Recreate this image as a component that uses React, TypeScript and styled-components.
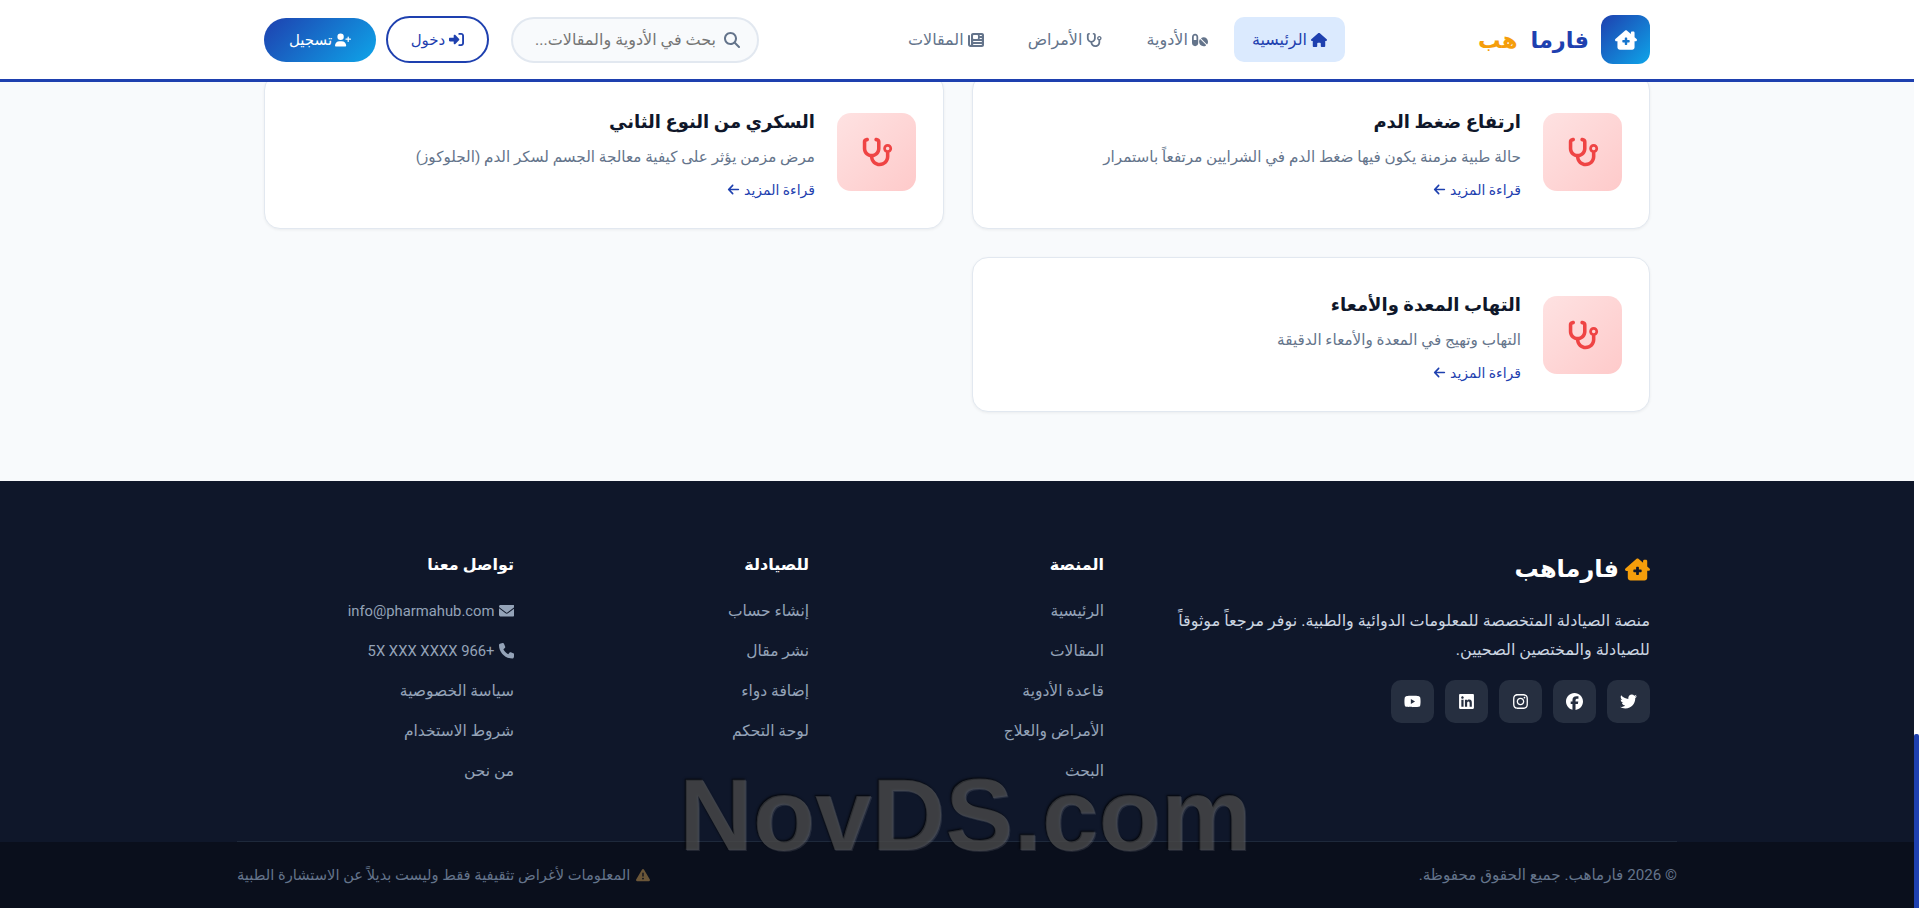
import React from "react";
import styled, { createGlobalStyle } from "styled-components";
import {
  FaHouse,
  FaPills,
  FaStethoscope,
  FaNewspaper,
  FaMagnifyingGlass,
  FaRightToBracket,
  FaUserPlus,
  FaHouseChimneyMedical,
  FaEnvelope,
  FaPhone,
  FaTriangleExclamation,
  FaTwitter,
  FaFacebook,
  FaInstagram,
  FaLinkedin,
  FaYoutube,
  FaArrowLeft,
} from "react-icons/fa6";

const GlobalStyle = createGlobalStyle`
  html, body { margin: 0; height: 908px; overflow: hidden; }
  body { font-family: Roboto, "DejaVu Sans", sans-serif; background: #f8fafc; }
  * { box-sizing: border-box; }
  a { text-decoration: none; color: inherit; }
  svg { height: 1em; width: auto; flex: none; }
`;

const Frame = styled.div`
  display: flex;
  width: 1919px;
  height: 908px;
  overflow: hidden;
  position: relative;
`;

const ScrollRail = styled.div`
  width: 5px;
  background: #fff;
  display: flex;
  flex-direction: column;
  justify-content: flex-end;
`;

const ScrollThumb = styled.div`
  height: 174px;
  background: #1e40af;
  border-radius: 2px 2px 0 0;
`;

const Page = styled.div`
  direction: rtl;
  width: 1914px;
  display: flex;
  flex-direction: column;
`;

const Header = styled.header`
  height: 82px;
  flex: none;
  background: #fff;
  border-bottom: 3px solid #1e40af;
  padding: 0 264px;
  display: flex;
  align-items: center;
  position: relative;
  z-index: 2;
`;

const Logo = styled.div`
  display: flex;
  align-items: center;
  gap: 12px;
  font-weight: 700;
  font-size: 22.5px;
  color: #1e40af;
  width: 174px;
  flex: none;
`;

const LogoMark = styled.div`
  width: 49px;
  height: 49px;
  flex: none;
  border-radius: 12px;
  background: linear-gradient(135deg, #1e40af, #0ea5e9);
  color: #fff;
  display: flex;
  align-items: center;
  justify-content: center;
  font-size: 22px;
`;

const LogoAccent = styled.span`
  color: #f59e0b;
  margin-right: 13px;
`;

const Nav = styled.nav`
  display: flex;
  align-items: center;
  gap: 8px;
  margin-right: 131px;
`;

const NavLink = styled.a<{ $active?: boolean }>`
  display: flex;
  align-items: center;
  gap: 4px;
  height: 45px;
  padding: 0 18px;
  border-radius: 10px;
  font-size: 16px;
  white-space: nowrap;
  color: ${(p) => (p.$active ? "#1e40af" : "#64748b")};
  background: ${(p) => (p.$active ? "#dbeafe" : "transparent")};
  svg { font-size: 16px; }
`;

const Actions = styled.div`
  margin-right: auto;
  display: flex;
  align-items: center;
  gap: 22px;
`;

const Search = styled.div`
  width: 248px;
  height: 46px;
  border: 2px solid #e2e8f0;
  background: #f8fafc;
  border-radius: 24px;
  display: flex;
  align-items: center;
  gap: 8px;
  padding: 0 17px;
  font-size: 16px;
  color: #757575;
  white-space: nowrap;
  overflow: hidden;
  svg { font-size: 16px; color: #64748b; }
`;

const Buttons = styled.div`
  display: flex;
  align-items: center;
  gap: 10px;
`;

const OutlineButton = styled.a`
  height: 47px;
  width: 103px;
  border: 2px solid #1e40af;
  border-radius: 24px;
  color: #1e40af;
  font-size: 15px;
  display: flex;
  align-items: center;
  justify-content: center;
  gap: 4px;
  svg { font-size: 15px; }
`;

const FilledButton = styled.a`
  height: 44px;
  width: 112px;
  border-radius: 22px;
  background: linear-gradient(135deg, #1e40af, #0ea5e9);
  color: #fff;
  font-size: 15px;
  display: flex;
  align-items: center;
  justify-content: center;
  gap: 3px;
  svg { font-size: 16px; }
`;

const Main = styled.main`
  margin-top: -8px;
  height: 407px;
  flex: none;
  padding: 0 264px;
  display: grid;
  grid-template-columns: 678px 680px;
  grid-auto-rows: 155px;
  gap: 28px;
  align-content: start;
`;

const Card = styled.article`
  background: #fff;
  border: 1px solid #e2e8f0;
  border-radius: 16px;
  box-shadow: 0 1px 3px rgba(0, 0, 0, 0.06);
  padding: 0 27px;
  display: flex;
  gap: 22px;
  align-items: center;
`;

const CardIcon = styled.div`
  width: 79px;
  height: 78px;
  flex: none;
  border-radius: 14px;
  background: linear-gradient(135deg, #fee2e2, #fecaca);
  color: #ef4444;
  display: flex;
  align-items: center;
  justify-content: center;
  font-size: 32px;
`;

const CardBody = styled.div`
  display: flex;
  flex-direction: column;
  padding-top: 3px;
`;

const CardTitle = styled.h3`
  margin: 0 0 11px;
  font-size: 18px;
  font-weight: 700;
  color: #0f172a;
  line-height: 26px;
`;

const CardText = styled.p`
  margin: 0 0 14px;
  font-size: 15.2px;
  color: #64748b;
  line-height: 22px;
`;

const ReadMore = styled.a`
  display: flex;
  align-items: center;
  gap: 4px;
  height: 16px;
  font-size: 14px;
  color: #1e40af;
  svg { font-size: 13px; }
`;

const Footer = styled.footer`
  flex: 1;
  background: #0f172a;
  display: flex;
  flex-direction: column;
`;

const FooterGrid = styled.div`
  height: 361px;
  margin: 0 237px;
  padding: 72px 27px 0;
  display: grid;
  grid-template-columns: 546px 295px 295px 1fr;
  border-bottom: 1px solid #1e293b;
`;

const BrandTitle = styled.div`
  display: flex;
  align-items: center;
  gap: 6px;
  color: #fff;
  font-size: 24px;
  font-weight: 700;
  margin: 2px 0 23px;
  svg { color: #f59e0b; font-size: 25px; }
`;

const BrandText = styled.p`
  margin: 0 0 16px;
  color: #cbd5e1;
  font-size: 16px;
  line-height: 29px;
  width: 480px;
`;

const Socials = styled.div`
  display: flex;
  gap: 11px;
`;

const SocialButton = styled.a`
  width: 43px;
  height: 43px;
  border-radius: 10px;
  background: #262f40;
  color: #fff;
  display: flex;
  align-items: center;
  justify-content: center;
  font-size: 17px;
`;

const Column = styled.div`
  display: flex;
  flex-direction: column;
`;

const ColumnTitle = styled.h4`
  margin: 0 0 14px;
  color: #fff;
  font-size: 16px;
  font-weight: 700;
  line-height: 24px;
`;

const ColumnLink = styled.a`
  display: flex;
  align-items: center;
  gap: 4px;
  height: 40px;
  color: #94a3b8;
  font-size: 15.5px;
  white-space: nowrap;
`;

const ContactValue = styled.span`
  font-size: 14.8px;
`;

const FooterBar = styled.div`
  flex: 1;
  background: #0a0f1c;
  padding: 0 237px;
  display: flex;
  align-items: center;
  justify-content: space-between;
  color: #64748b;
  font-size: 15.2px;
`;

const Note = styled.span`
  display: flex;
  align-items: center;
  gap: 6px;
  font-size: 14.7px;
  svg { color: #6b5638; font-size: 14px; }
`;

const Watermark = styled.div`
  position: absolute;
  left: 679px;
  top: 755px;
  font-family: "Liberation Sans", sans-serif;
  font-weight: 700;
  font-size: 102px;
  line-height: 120px;
  color: rgba(128, 128, 128, 0.33);
  text-shadow: 1px 1px 0 rgba(255, 255, 255, 0.1), -1px -1px 2px rgba(0, 0, 0, 0.7);
  pointer-events: none;
`;

const cards = [
  { title: "ارتفاع ضغط الدم", text: "حالة طبية مزمنة يكون فيها ضغط الدم في الشرايين مرتفعاً باستمرار" },
  { title: "السكري من النوع الثاني", text: "مرض مزمن يؤثر على كيفية معالجة الجسم لسكر الدم (الجلوكوز)" },
  { title: "التهاب المعدة والأمعاء", text: "التهاب وتهيج في المعدة والأمعاء الدقيقة" },
];

const platformLinks = ["الرئيسية", "المقالات", "قاعدة الأدوية", "الأمراض والعلاج", "البحث"];
const pharmacistLinks = ["إنشاء حساب", "نشر مقال", "إضافة دواء", "لوحة التحكم"];

export default function App() {
  return (
    <Frame>
      <GlobalStyle />
      <Page>
        <Header>
          <Logo>
            <LogoMark>
              <FaHouseChimneyMedical />
            </LogoMark>
            <span>
              فارما<LogoAccent>هب</LogoAccent>
            </span>
          </Logo>
          <Nav>
            <NavLink $active><FaHouse /> الرئيسية</NavLink>
            <NavLink><FaPills /> الأدوية</NavLink>
            <NavLink><FaStethoscope /> الأمراض</NavLink>
            <NavLink><FaNewspaper /> المقالات</NavLink>
          </Nav>
          <Actions>
            <Search>
              <FaMagnifyingGlass />
              بحث في الأدوية والمقالات...
            </Search>
            <Buttons>
              <OutlineButton><FaRightToBracket /> دخول</OutlineButton>
              <FilledButton><FaUserPlus /> تسجيل</FilledButton>
            </Buttons>
          </Actions>
        </Header>
        <Main>
          {cards.map((card) => (
            <Card key={card.title}>
              <CardIcon>
                <FaStethoscope />
              </CardIcon>
              <CardBody>
                <CardTitle>{card.title}</CardTitle>
                <CardText>{card.text}</CardText>
                <ReadMore>قراءة المزيد <FaArrowLeft /></ReadMore>
              </CardBody>
            </Card>
          ))}
        </Main>
        <Footer>
          <FooterGrid>
            <Column>
              <BrandTitle><FaHouseChimneyMedical /> فارماهب</BrandTitle>
              <BrandText>
                منصة الصيادلة المتخصصة للمعلومات الدوائية والطبية. نوفر مرجعاً موثوقاً للصيادلة والمختصين الصحيين.
              </BrandText>
              <Socials>
                <SocialButton><FaTwitter /></SocialButton>
                <SocialButton><FaFacebook /></SocialButton>
                <SocialButton><FaInstagram /></SocialButton>
                <SocialButton><FaLinkedin /></SocialButton>
                <SocialButton><FaYoutube /></SocialButton>
              </Socials>
            </Column>
            <Column>
              <ColumnTitle>المنصة</ColumnTitle>
              {platformLinks.map((link) => <ColumnLink key={link}>{link}</ColumnLink>)}
            </Column>
            <Column>
              <ColumnTitle>للصيادلة</ColumnTitle>
              {pharmacistLinks.map((link) => <ColumnLink key={link}>{link}</ColumnLink>)}
            </Column>
            <Column>
              <ColumnTitle>تواصل معنا</ColumnTitle>
              <ColumnLink><FaEnvelope /> <ContactValue>info@pharmahub.com</ContactValue></ColumnLink>
              <ColumnLink><FaPhone /> <ContactValue>+966 5X XXX XXXX</ContactValue></ColumnLink>
              <ColumnLink>سياسة الخصوصية</ColumnLink>
              <ColumnLink>شروط الاستخدام</ColumnLink>
              <ColumnLink>من نحن</ColumnLink>
            </Column>
          </FooterGrid>
          <FooterBar>
            <span>© 2026 فارماهب. جميع الحقوق محفوظة.</span>
            <Note><FaTriangleExclamation /> المعلومات لأغراض تثقيفية فقط وليست بديلاً عن الاستشارة الطبية</Note>
          </FooterBar>
        </Footer>
      </Page>
      <ScrollRail>
        <ScrollThumb />
      </ScrollRail>
      <Watermark>NovDS.com</Watermark>
    </Frame>
  );
}
